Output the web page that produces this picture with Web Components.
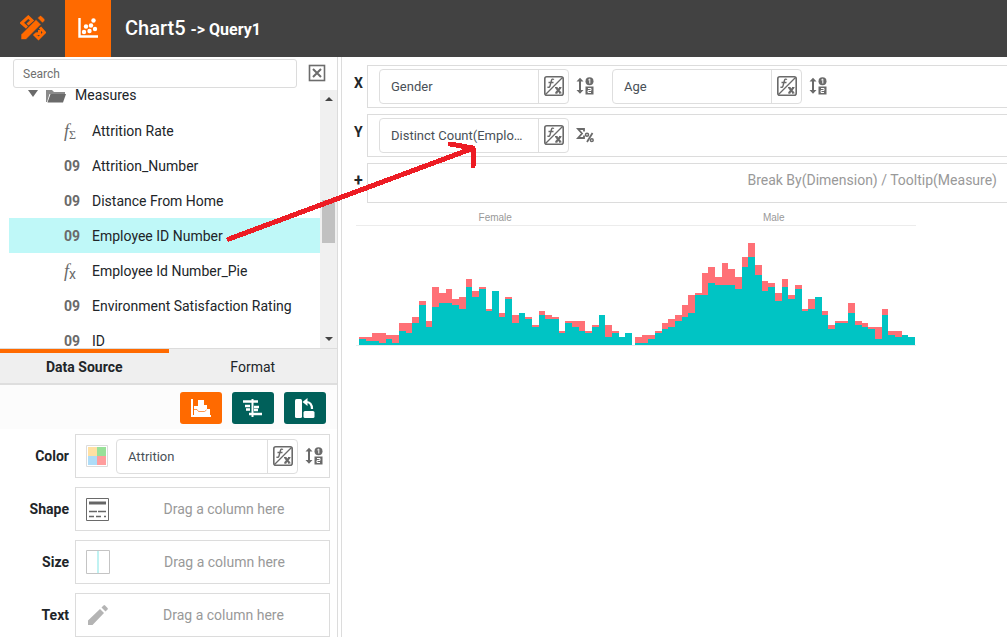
<!DOCTYPE html>
<html lang="en">
<head>
<meta charset="utf-8">
<title>Chart5 -> Query1</title>
<style>
html, body { height: 100%; }
body { margin: 0; background: #fff; overflow: hidden; font: 14px/20px Roboto, "Liberation Sans", sans-serif; color: #212529; }
</style>
</head>
<body>
<chart-editor></chart-editor>
<script>
const ICONS = {
  tools: [26, 26, `<g fill="none" stroke="#ff6a00"><path d="M7 12.500 1.800 8 8.300 2 12 5.500 7.500 9.500" stroke-width="3"/><path d="M14 19l4.500 4.500 6-6L20 12.500M15.500 19l4-.5v-3.500" stroke-width="3"/></g><path d="M1 19.500 16 4.500l5 5L6 24.500H1zM17.500 3l2-2q1-1 2 0l3 3q1 1 0 2l-2 2z" fill="#ff6a00" stroke="#424242" stroke-width=".6"/>`],
  scatter: [20, 20, `<path d="M1.500 0v18.500H20" fill="none" stroke="#fff" stroke-width="2.400"/><g fill="#fff"><circle cx="6" cy="14" r="2.200"/><circle cx="8" cy="8.500" r="2.200"/><circle cx="11.500" cy="13" r="2.200"/><circle cx="13" cy="7.500" r="2.200"/><circle cx="15.500" cy="2.500" r="2.200"/><circle cx="17" cy="11" r="2.200"/></g>`],
  close: [18, 18, `<rect x="1.500" y="1.500" width="15" height="15" fill="#fff" stroke="#6c6c6c" stroke-width="1.600"/><path d="M5 5l8 8M13 5l-8 8" stroke="#6c6c6c" stroke-width="2"/>`],
  folder: [20, 14, `<path d="M0 1h6l2 2h11v2H3.500L1 13H0z" fill="#8a8a8a"/><path d="M4.500 5H20l-3 8.500H1.500z" fill="#6a6a6a"/>`],
  fx: [20, 20, `<rect x=".8" y=".8" width="18.400" height="18.400" rx="2" fill="#fff" stroke="#6a6a6a" stroke-width="1.600"/><path d="M1.500 18.500l17-17" stroke="#6a6a6a" stroke-width="1.200"/><path d="M10 3.500Q8 2.200 7.300 5L6 10Q5.500 12 3.500 11M4.500 6.500h5" fill="none" stroke="#6a6a6a" stroke-width="1.400"/><path d="M12 11.500l4.500 5.500M16.500 11.500l-4.500 5.500" fill="none" stroke="#6a6a6a" stroke-width="2"/><path d="M11 11.500h2.500M15 11.500h2.500M11 17h2.500M15 17h2.500" stroke="#6a6a6a" stroke-width="1"/>`],
  sort: [18, 18, `<path d="M4 3v12" stroke="#6a6a6a" stroke-width="2"/><path d="M.5 4.500 4 .8l3.500 3.700zM.5 13 4 16.700 7.500 13z" fill="#6a6a6a"/><circle cx="13.500" cy="4.200" r="4" fill="#6a6a6a"/><rect x="9.500" y="9.500" width="8" height="8" fill="#6a6a6a"/><path d="M12.300 3l1.500-1v4.500M12 11.500h3v2h-3v2h3" fill="none" stroke="#fff" stroke-width="1"/>`],
  percent: [18, 16, `<path d="M8 4.500V2H2l4 4.500-4 4.500h6V8.500" fill="none" stroke="#6a6a6a" stroke-width="1.800"/><path d="M16.500 6l-5.500 9" stroke="#6a6a6a" stroke-width="1.800"/><circle cx="11" cy="7.800" r="1.500" fill="none" stroke="#6a6a6a" stroke-width="1.500"/><circle cx="15.800" cy="13.200" r="1.400" fill="none" stroke="#6a6a6a" stroke-width="1.500"/>`],
  bars: [20, 18, `<path d="M1 0v17h19" fill="none" stroke="#fff" stroke-width="2"/><path d="M3 7h4V1h6v5h3v4h3v6H3z" fill="#fff"/><path d="M3 10.500h3l1.500 2h6l2-1.500" fill="none" stroke="#ff6a00" stroke-width=".7"/>`],
  align: [20, 18, `<path d="M9.500 0v18" stroke="#fff" stroke-width="2"/><path d="M0 2.500h15M2 7h5M3 10.500h4M11 8h5M11 11h4M6 15h13" stroke="#fff" stroke-width="2.400"/>`],
  rotate: [20, 20, `<rect x="0" y="1" width="7" height="19" rx="1.500" fill="#fff"/><rect x="8.500" y="13" width="11" height="7" rx="1.500" fill="#fff"/><path d="M11 4q6 0 6 7" fill="none" stroke="#fff" stroke-width="2.200"/><path d="M7.500 4l5-4v8z" fill="#fff"/>`],
  palette: [22, 22, `<path d="M.5.500h21v21H.5z" fill="#fff" stroke="#dcdcdc"/><path d="M2 2h9v9H2z" fill="#ffe0a3"/><path d="M11 2h9v9h-9z" fill="#98e098"/><path d="M2 11h9v9H2z" fill="#aedcf7"/><path d="M11 11h9v9h-9z" fill="#ff9d9d"/>`],
  lines: [23, 23, `<path d="M.5.500h22v22H.5z" fill="#fff" stroke="#6a6a6a"/><path d="M3 5h17" stroke="#666" stroke-width="3"/><path d="M3 13.500h8M12 13.500h8" stroke="#666" stroke-width="1.500"/><path d="M3 18.500h5M10 18.500h5M18 18.500h2" stroke="#666" stroke-width="1.500"/>`],
  size: [24, 24, `<path d="M.5.500h23v23H.5z" fill="#fff" stroke="#c4c4c4"/><path d="M12 1v22" stroke="#c0f2f2" stroke-width="2"/>`],
  pencil: [22, 20, `<path d="M2 20v-4.500L14 4l4 4L6.500 20zM15.500 2.500l2-2q.8-.8 1.600 0l2.400 2.400q.8.800 0 1.600l-2 2z" fill="#b4b4b4"/>`]
};

function define(name, html, setup) {
  const tpl = document.createElement("template");
  tpl.innerHTML = html;
  customElements.define(name, class extends HTMLElement {
    constructor() {
      super();
      this.attachShadow({ mode: "open" }).append(tpl.content.cloneNode(true));
    }
    connectedCallback() { if (setup) setup(this, this.shadowRoot); }
  });
}

define("ui-icon", `<style>:host{display:block;flex:none}svg{display:block}</style><div></div>`, (el, root) => {
  const [w, h, body] = ICONS[el.getAttribute("name")];
  root.querySelector("div").innerHTML = `<svg width="${w}" height="${h}" viewBox="0 0 ${w} ${h}" aria-hidden="true">${body}</svg>`;
});

define("editor-header", `
<style>
:host{display:flex;align-items:stretch;height:57px;background:#424242;color:#fff;flex:none}
a{display:flex;align-items:center;justify-content:center;padding-bottom:2px;box-sizing:border-box}
.home{width:65px}
.chart{width:46px;background:#ff6a00}
h1{margin:0 0 0 14px;align-self:center;font-size:20px;line-height:24px;font-weight:500}
small{font-size:16px;font-weight:700}
</style>
<a class="home" href="#" aria-label="Designer"><ui-icon name="tools"></ui-icon></a>
<a class="chart" href="#" aria-label="Chart"><ui-icon name="scatter"></ui-icon></a>
<h1><slot></slot> <small><slot name="query"></slot></small></h1>`);

define("search-bar", `
<style>
:host{display:flex;align-items:flex-start;gap:11px;padding:2px 11px 0 13px;flex:none}
input{flex:1;min-width:0;box-sizing:border-box;height:29px;padding:0 9px;border:1px solid #dcdcdc;border-radius:3px;background:#fff;font:12px/16px Roboto,sans-serif;color:#333;outline:none}
input::placeholder{color:#6f6f6f;opacity:1}
button{padding:5px 0 0;border:0;background:none}
</style>
<input type="text" placeholder="Search" aria-label="Search">
<button aria-label="Clear search"><ui-icon name="close"></ui-icon></button>`);

define("tree-item", `
<style>
:host{display:flex;align-items:center;height:35px;padding-left:55px}
:host([selected]){background:#bff8f8}
:host([group]){padding-left:19px;height:25px;align-items:flex-start;line-height:15px}
.kind{width:16px;margin-right:12px;color:#6a6a6a;font-weight:700;white-space:nowrap}
.kind.fn{font-family:"Liberation Serif",serif;font-style:italic;font-weight:400;font-size:18px}
.kind.fn sub{font-style:normal;font-size:12px;line-height:0;vertical-align:-2px}
.kind.fn sub.x{font-family:Roboto,sans-serif;font-size:14px}
.twist{width:0;border:5px solid transparent;border-top:7px solid #6a6a6a;border-bottom:0;margin:2px 8px 0 0}
ui-icon{margin:1px 9px 0 0}
</style>
<span id="lead" style="display:contents"></span><span><slot></slot></span>`, (el, root) => {
  const kinds = {
    number: `<span class="kind">09</span>`,
    sum: `<span class="kind fn">f<sub>Σ</sub></span>`,
    calc: `<span class="kind fn">f<sub class="x">x</sub></span>`
  };
  root.getElementById("lead").innerHTML = el.hasAttribute("group")
    ? `<span class="twist"></span><ui-icon name="folder"></ui-icon>`
    : kinds[el.getAttribute("kind")];
});

define("field-tree", `
<style>
:host{display:flex;height:260px;overflow:hidden;padding-left:9px;border-bottom:1px solid #dcdcdc;flex:none}
.list{flex:1}
.bar{width:17px;margin-top:2px;background:#f0f0f0;display:flex;flex-direction:column;align-items:center;justify-content:space-between;padding:7px 0;box-sizing:border-box}
.track{flex:1;display:flex;flex-direction:column;width:13px}
.before{flex:99}.thumb{flex:43;background:#c1c1c1}.after{flex:94}
.up,.down{border:4px solid transparent}
.up{border-top:0;border-bottom:4px solid #444}
.down{border-bottom:0;border-top:4px solid #444}
</style>
<div class="list" role="tree"><slot></slot></div>
<div class="bar"><span class="up"></span><div class="track"><span class="before"></span><span class="thumb"></span><span class="after"></span></div><span class="down"></span></div>`);

define("panel-tabs", `
<style>
:host{display:flex;background:#efefef;border-bottom:2px solid #dedede;height:34px;flex:none}
button{flex:1;padding:0 0 2px;border:0;border-top:4px solid transparent;background:none;font:14px/28px Roboto,sans-serif;color:#212529}
button.on{border-top-color:#ff6a00;font-weight:700}
</style>
<button class="on">Data Source</button><button>Format</button>`);

define("chart-actions", `
<style>
:host{display:flex;justify-content:flex-end;gap:10px;padding:7px 11px 5px;background:#fcfcfc;flex:none}
button{display:flex;align-items:center;justify-content:center;width:42px;height:32px;padding:0;border:0;border-radius:3px;background:#00605a}
button.on{background:#ff6a00}
</style>
<button class="on" aria-label="Chart style"><ui-icon name="bars"></ui-icon></button>
<button aria-label="Align"><ui-icon name="align"></ui-icon></button>
<button aria-label="Swap axes"><ui-icon name="rotate"></ui-icon></button>`);

define("column-pill", `
<style>
:host{display:flex;align-items:center;gap:7px;min-width:0;flex:0 1 215px;font-size:13px;color:#495057}
.box{display:flex;flex:1;min-width:0;height:33px;border:1px solid #dedede;border-radius:4px;background:#fff}
.name{flex:1;min-width:0;padding:0 11px;line-height:33px;overflow:hidden;text-overflow:ellipsis;white-space:nowrap}
button{display:flex;align-items:center;justify-content:center;padding:0 0 1px;border:0;background:none}
.fx{width:30px;border-left:1px solid #dedede}
</style>
<div class="box"><span class="name"><slot></slot></span><button class="fx" aria-label="Edit expression"><ui-icon name="fx"></ui-icon></button></div>
<button id="op" aria-label="Options"></button>`, (el, root) => {
  root.getElementById("op").innerHTML = `<ui-icon name="${el.getAttribute("op") || "sort"}"></ui-icon>`;
});

define("drop-shelf", `
<style>
:host{display:flex;align-items:stretch}
.label{width:70px;padding-right:1px;box-sizing:border-box;text-align:right;font-weight:700;line-height:44px}
.box{flex:1;min-width:0;box-sizing:border-box;height:44px;display:flex;align-items:center;border:1px solid #dcdcdc;padding:0 6px 0 10px;margin-left:5px}
.icon{margin-right:8px}
.content{flex:1;min-width:0;display:flex;justify-content:center;color:#999}
:host([empty]) .content{padding-left:8px}
::slotted(column-pill){flex:1}
</style>
<span class="label"></span>
<div class="box"><div class="icon"></div><div class="content"><slot></slot></div></div>`, (el, root) => {
  root.querySelector(".label").textContent = el.getAttribute("label");
  root.querySelector(".icon").innerHTML = `<ui-icon name="${el.getAttribute("icon")}"></ui-icon>`;
});

define("axis-shelf", `
<style>
:host{display:flex;height:43px}
:host([hint]){height:40px}
.label{width:25px;padding-left:12px;box-sizing:border-box;font-weight:700;line-height:36px}
:host([hint]) .label{font-size:16px}
.box{flex:1;min-width:0;box-sizing:border-box;display:flex;align-items:center;gap:18px;padding:0 11px;border:1px solid #dcdcdc;border-right:0}
:host([hint]) .box{justify-content:flex-end;padding:0 10px 6px;color:#999}
</style>
<span class="label"></span><div class="box"><slot></slot></div>`, (el, root) => {
  root.querySelector(".label").textContent = el.getAttribute("label");
});

/* Each entry is [total, lower band] in employees per age; one employee is two units high. */
const FEMALE = [[4,3],[4,2],[6,2],[6,1],[5,3],[5,1],[11,7],[11,6],[14,11],[22,20],[12,9],[29,19],[26,21],[28,21],[23,20],[24,18],[33,29],[27,24],[29,28],[18,17],[27,27],[16,14],[24,23],[15,11],[16,16],[14,13],[10,9],[17,15],[15,13],[14,13],[7,6],[12,11],[12,9],[12,7],[7,6],[10,9],[15,15],[10,4],[7,6],[4,4],[6,6]];
const MALE = [[4,1],[5,1],[5,3],[7,6],[11,8],[13,9],[15,12],[20,14],[25,16],[26,25],[36,25],[39,31],[34,30],[41,30],[38,30],[34,28],[44,39],[51,44],[40,35],[32,27],[31,29],[26,22],[33,29],[25,23],[30,28],[18,17],[23,18],[24,24],[17,15],[10,8],[12,11],[12,11],[21,16],[12,10],[11,9],[9,8],[9,3],[18,15],[7,5],[7,4],[5,5],[4,4]];

define("trellis-chart", `
<style>
:host{display:block;padding:5px 0 0 14px;color:#999;font-family:"Liberation Sans",sans-serif;font-size:10px}
.frame{width:100%;max-width:560px}
.heads{display:flex;border-bottom:1px solid #ececec;height:17px;line-height:19px;padding-right:3px}
.heads span{flex:1;text-align:center}
svg{display:block;width:100%}
</style>
<div class="frame"><div class="heads"><span>Female</span><span>Male</span></div><div class="plot"></div></div>`, (el, root) => {
  const area = (data, x0, x1, band, color) => {
    const n = data.length;
    let d = `M${x0} 119`;
    data.forEach((v, i) => {
      const a = Math.round(x0 + (x1 - x0) * i / n), b = Math.round(x0 + (x1 - x0) * (i + 1) / n);
      d += `L${a} ${119 - v[band] * 2}H${b}`;
    });
    return `<path d="${d}V119z" fill="${color}"/>`;
  };
  root.querySelector(".plot").innerHTML = `<svg viewBox="0 0 560 120" role="img" aria-label="Employees by age and gender" shape-rendering="crispEdges"><path d="M0 119.500h560" stroke="#e6eeee"/>` +
    area(FEMALE, 3, 276, 0, "#ff7076") + area(FEMALE, 3, 276, 1, "#00c4c4") +
    area(MALE, 279, 559, 0, "#ff7076") + area(MALE, 279, 559, 1, "#00c4c4") + `</svg>`;
});

define("drag-arrow", `
<style>:host{position:absolute;top:0;left:0;pointer-events:none}svg{display:block}</style>
<svg width="490" height="260" viewBox="0 0 490 260" aria-hidden="true" shape-rendering="crispEdges"><path d="M229 239 471 149M450 144l23 4v18" fill="none" stroke="#ed1c24" stroke-width="5" stroke-linecap="round" stroke-linejoin="round"/></svg>`);

define("chart-editor", `
<style>
:host{display:flex;flex-direction:column;height:100%;position:relative;overflow:hidden}
main{display:flex;flex:1;min-height:0;gap:3px}
aside{width:337px;flex:none;display:flex;flex-direction:column;border-right:1px solid #dcdcdc}
.shelves{display:flex;flex-direction:column;gap:9px;padding:5px 7px 0 0}
.work{flex:1;min-width:0;border-left:1px solid #dcdcdc;padding-top:8px}
.axes{display:flex;flex-direction:column;gap:6px}
</style>
<editor-header>Chart5<span slot="query">-&gt; Query1</span></editor-header>
<main>
  <aside>
    <search-bar></search-bar>
    <field-tree>
      <tree-item group>Measures</tree-item>
      <tree-item kind="sum">Attrition Rate</tree-item>
      <tree-item kind="number">Attrition_Number</tree-item>
      <tree-item kind="number">Distance From Home</tree-item>
      <tree-item kind="number" selected>Employee ID Number</tree-item>
      <tree-item kind="calc">Employee Id Number_Pie</tree-item>
      <tree-item kind="number">Environment Satisfaction Rating</tree-item>
      <tree-item kind="number">ID</tree-item>
    </field-tree>
    <panel-tabs></panel-tabs>
    <chart-actions></chart-actions>
    <div class="shelves">
      <drop-shelf label="Color" icon="palette"><column-pill>Attrition</column-pill></drop-shelf>
      <drop-shelf label="Shape" icon="lines" empty>Drag a column here</drop-shelf>
      <drop-shelf label="Size" icon="size" empty>Drag a column here</drop-shelf>
      <drop-shelf label="Text" icon="pencil" empty>Drag a column here</drop-shelf>
    </div>
  </aside>
  <section class="work">
    <div class="axes">
      <axis-shelf label="X"><column-pill>Gender</column-pill><column-pill>Age</column-pill></axis-shelf>
      <axis-shelf label="Y"><column-pill op="percent">Distinct Count(Employee ID Number)</column-pill></axis-shelf>
      <axis-shelf label="+" hint>Break By(Dimension) / Tooltip(Measure)</axis-shelf>
    </div>
    <trellis-chart></trellis-chart>
  </section>
</main>
<drag-arrow></drag-arrow>`);
</script>
</body>
</html>
